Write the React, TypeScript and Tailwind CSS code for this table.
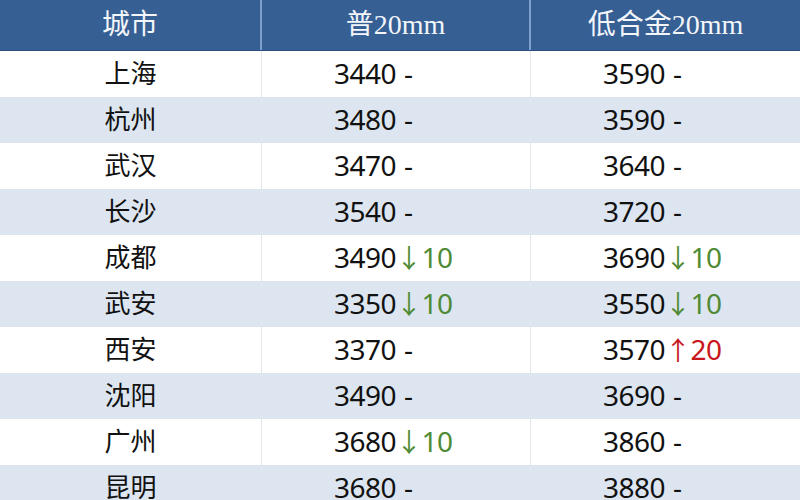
import React from "react";

type Change = { dir: "down" | "up"; amount: number } | null;

interface PriceRow {
  city: string;
  plain: number;
  plainChange: Change;
  alloy: number;
  alloyChange: Change;
}

const rows: PriceRow[] = [
  { city: "上海", plain: 3440, plainChange: null, alloy: 3590, alloyChange: null },
  { city: "杭州", plain: 3480, plainChange: null, alloy: 3590, alloyChange: null },
  { city: "武汉", plain: 3470, plainChange: null, alloy: 3640, alloyChange: null },
  { city: "长沙", plain: 3540, plainChange: null, alloy: 3720, alloyChange: null },
  { city: "成都", plain: 3490, plainChange: { dir: "down", amount: 10 }, alloy: 3690, alloyChange: { dir: "down", amount: 10 } },
  { city: "武安", plain: 3350, plainChange: { dir: "down", amount: 10 }, alloy: 3550, alloyChange: { dir: "down", amount: 10 } },
  { city: "西安", plain: 3370, plainChange: null, alloy: 3570, alloyChange: { dir: "up", amount: 20 } },
  { city: "沈阳", plain: 3490, plainChange: null, alloy: 3690, alloyChange: null },
  { city: "广州", plain: 3680, plainChange: { dir: "down", amount: 10 }, alloy: 3860, alloyChange: null },
  { city: "昆明", plain: 3680, plainChange: null, alloy: 3880, alloyChange: null },
];

const sans = "font-['Noto_Sans','Noto_Sans_CJK_SC',sans-serif]";
const serif = "font-['Liberation_Serif','Noto_Sans_CJK_SC',serif]";

function Price({ value, change }: { value: number; change: Change }) {
  return (
    <span className={`${sans} text-[28px] leading-none tracking-[-0.5px] text-[#111]`}>
      {value}
      {change === null ? (
        <span className="ml-[8px]">-</span>
      ) : change.dir === "down" ? (
        <span className="text-[#4f8a35]">
          <span className="font-['Noto_Sans_CJK_SC',sans-serif] text-[26px]">↓</span>
          {change.amount}
        </span>
      ) : (
        <span className="text-[#c8161d]">
          <span className="font-['Noto_Sans_CJK_SC',sans-serif] text-[26px]">↑</span>
          {change.amount}
        </span>
      )}
    </span>
  );
}

export default function App() {
  return (
    <div className="w-[800px] h-[500px] overflow-hidden bg-white">
      <div className="grid grid-cols-[262px_269px_269px] h-[51px] bg-[#365f94] border-b border-[#2b4f7e]">
        <div className={`${serif} flex items-center justify-center text-[28px] text-[#f2f5fa] border-r-2 border-[#7f9fcc]`}>
          城市
        </div>
        <div className={`${serif} flex items-center justify-center text-[28px] text-[#f2f5fa] border-r-2 border-[#7f9fcc]`}>
          普20mm
        </div>
        <div className={`${serif} flex items-center justify-center text-[28px] text-[#f2f5fa]`}>
          低合金20mm
        </div>
      </div>
      {rows.map((r, i) => (
        <div
          key={r.city}
          className={`grid grid-cols-[262px_269px_269px] h-[46px] ${i % 2 === 1 ? "bg-[#dce5f0]" : "bg-white"}`}
        >
          <div className={`${sans} flex items-center justify-center pb-[2px] text-[26px] text-[#111] border-r border-[#e3e6ea]`}>
            {r.city}
          </div>
          <div className="flex items-center pl-[72px] pb-[2px] border-r border-[#e3e6ea]">
            <Price value={r.plain} change={r.plainChange} />
          </div>
          <div className="flex items-center pl-[72px] pb-[2px]">
            <Price value={r.alloy} change={r.alloyChange} />
          </div>
        </div>
      ))}
    </div>
  );
}
